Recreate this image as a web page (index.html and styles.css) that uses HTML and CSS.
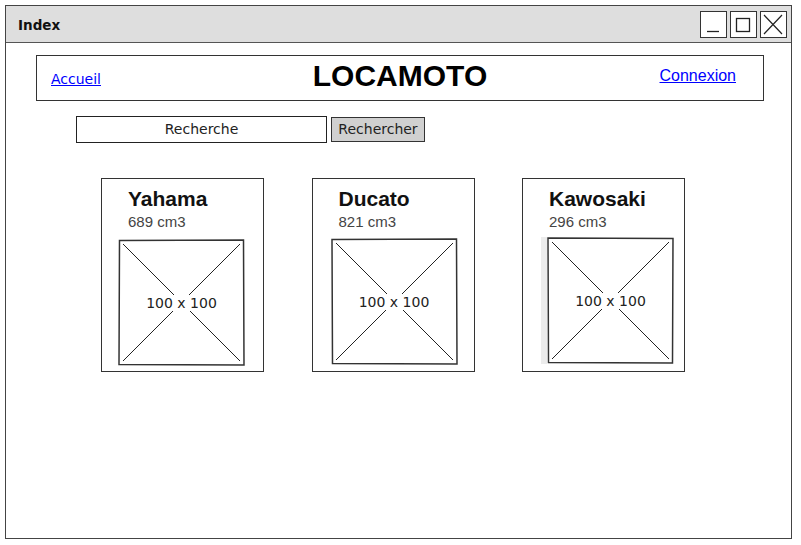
FILE: index.html
```html
<!DOCTYPE html>
<html lang="fr">
<head>
  <meta charset="UTF-8">
  <title>Index</title>
  <link rel="stylesheet" href="styles.css">
</head>
<body>
  <div class="window">
    <div class="title-bar">
      <span class="title">Index</span>
      <div class="win-buttons">
        <div class="win-btn">
          <svg width="24" height="25" viewBox="0 0 24 25"><line x1="6" y1="19.5" x2="18" y2="19.5" stroke="#222" stroke-width="1.3"/></svg>
        </div>
        <div class="win-btn">
          <svg width="24" height="25" viewBox="0 0 24 25"><rect x="5.5" y="6.5" width="13" height="13" fill="none" stroke="#222" stroke-width="1.3"/></svg>
        </div>
        <div class="win-btn">
          <svg width="24" height="25" viewBox="0 0 24 25"><path d="M3 3 L21 22 M21 3 L3 22" stroke="#222" stroke-width="1.2" fill="none"/></svg>
        </div>
      </div>
    </div>

    <div class="content">
      <div class="header">
        <a href="#" class="nav-left">Accueil</a>
        <h1>LOCAMOTO</h1>
        <a href="#" class="nav-right">Connexion</a>
      </div>

      <div class="search-row">
        <div class="search-input">Recherche</div>
        <div class="search-button">Rechercher</div>
      </div>

      <div class="cards">
        <div class="card">
          <h2>Yahama</h2>
          <p class="cc">689 cm3</p>
          <div class="thumb">
            <svg class="cross" width="127" height="127" viewBox="0 0 127 127"><path d="M1.5 1.5 L125.5 1 L126 126 L1 125.5 Z" fill="#fff" stroke="#333" stroke-width="1.5"/><path d="M5 5 L122 122 M122 5 L5 122" stroke="#222" stroke-width="1"/></svg>
            <span class="thumb-label">100 x 100</span>
          </div>
        </div>
        <div class="card">
          <h2>Ducato</h2>
          <p class="cc">821 cm3</p>
          <div class="thumb">
            <svg class="cross" width="127" height="127" viewBox="0 0 127 127"><path d="M1 1.5 L125.5 1 L126 126 L1.5 125.5 Z" fill="#fff" stroke="#333" stroke-width="1.5"/><path d="M5 5 L122 122 M122 5 L5 122" stroke="#222" stroke-width="1"/></svg>
            <span class="thumb-label">100 x 100</span>
          </div>
        </div>
        <div class="card">
          <h2>Kawosaki</h2>
          <p class="cc">296 cm3</p>
          <div class="thumb shaded">
            <svg class="cross" width="127" height="127" viewBox="0 0 127 127"><path d="M1 1 L126 1.5 L125.5 126 L1.5 125.5 Z" fill="#fff" stroke="#333" stroke-width="1.5"/><path d="M5 5 L122 122 M122 5 L5 122" stroke="#222" stroke-width="1"/></svg>
            <span class="thumb-label">100 x 100</span>
          </div>
        </div>
      </div>
    </div>
  </div>
</body>
</html>
```

FILE: styles.css
```css
* {
  box-sizing: border-box;
  margin: 0;
  padding: 0;
}
body {
  background: #fff;
  font-family: 'Liberation Sans', Arial, sans-serif;
}
.window {
  margin: 5px 0 0 5px;
  width: 787px;
  height: 534px;
  border: 1.5px solid #444;
  background: #fff;
}
.title-bar {
  height: 37px;
  background: #dedede;
  border-bottom: 1.5px solid #555;
  display: flex;
  align-items: center;
  justify-content: space-between;
  padding: 0 4px 0 12px;
}
.title {
  font-family: 'Comic Sans MS', 'DejaVu Sans', sans-serif;
  font-weight: bold;
  font-size: 13.5px;
  color: #111;
  margin-top: 1px;
}
.win-buttons {
  display: flex;
  gap: 3px;
}
.win-btn {
  width: 27px;
  height: 27px;
  background: #fff;
  border: 1.5px solid #333;
}
.win-btn svg {
  display: block;
}

/* isi halaman */
.content {
  padding: 12px 0 0 0;
}
.header {
  margin-left: 30px;
  width: 728px;
  height: 46px;
  border: 1.5px solid #333;
  display: grid;
  grid-template-columns: 1fr auto 1fr;
  align-items: center;
}
.header h1 {
  font-size: 30px;
  font-weight: bold;
  color: #000;
  margin-top: -5px;
}
.nav-left {
  font-family: 'Comic Sans MS', 'DejaVu Sans', sans-serif;
  font-size: 14px;
  color: #0000ff;
  padding-left: 14px;
  margin-top: 2px;
}
.nav-right {
  justify-self: end;
  padding-right: 27px;
  font-size: 16px;
  color: #0000ff;
  margin-top: -5px;
}
.search-row {
  display: flex;
  align-items: flex-start;
  margin: 15px 0 0 70px;
}
.search-input {
  width: 251px;
  height: 27px;
  border: 1.5px solid #222;
  text-align: center;
  font-family: 'Comic Sans MS', 'DejaVu Sans', sans-serif;
  font-size: 14px;
  line-height: 24px;
  color: #222;
}
.search-button {
  margin: 1px 0 0 4px;
  width: 94px;
  height: 25px;
  border: 1.5px solid #333;
  background: #d0d0d0;
  text-align: center;
  font-family: 'Comic Sans MS', 'DejaVu Sans', sans-serif;
  font-size: 14px;
  line-height: 23px;
  color: #222;
}
.cards {
  display: flex;
  gap: 47.5px;
  margin: 35px 0 0 95px;
}
.card {
  width: 163px;
  height: 194px;
  border: 1.5px solid #333;
  padding: 7px 0 0 16px;
}
.card h2 {
  font-size: 21px;
  font-weight: bold;
  color: #111;
  padding-left: 10px;
  line-height: 26px;
}
.cc {
  font-size: 15px;
  color: #444;
  padding-left: 10px;
  line-height: 18px;
  margin-top: 1px;
}
.thumb {
  position: relative;
  width: 127px;
  height: 127px;
  margin-top: 8px;
}
.thumb.shaded {
  margin-left: 8px;
  margin-top: 6px;
  box-shadow: -6px 0 0 #ececec;
}
.card:nth-child(2) .thumb {
  margin-left: 2px;
  margin-top: 7px;
}
.cross {
  display: block;
}
.thumb-label {
  position: absolute;
  left: 50%;
  top: 50%;
  transform: translate(-50%, -50%);
  background: #fff;
  padding: 0 2px;
  font-family: 'Comic Sans MS', 'DejaVu Sans', sans-serif;
  font-size: 14px;
  color: #222;
  white-space: nowrap;
}
```
